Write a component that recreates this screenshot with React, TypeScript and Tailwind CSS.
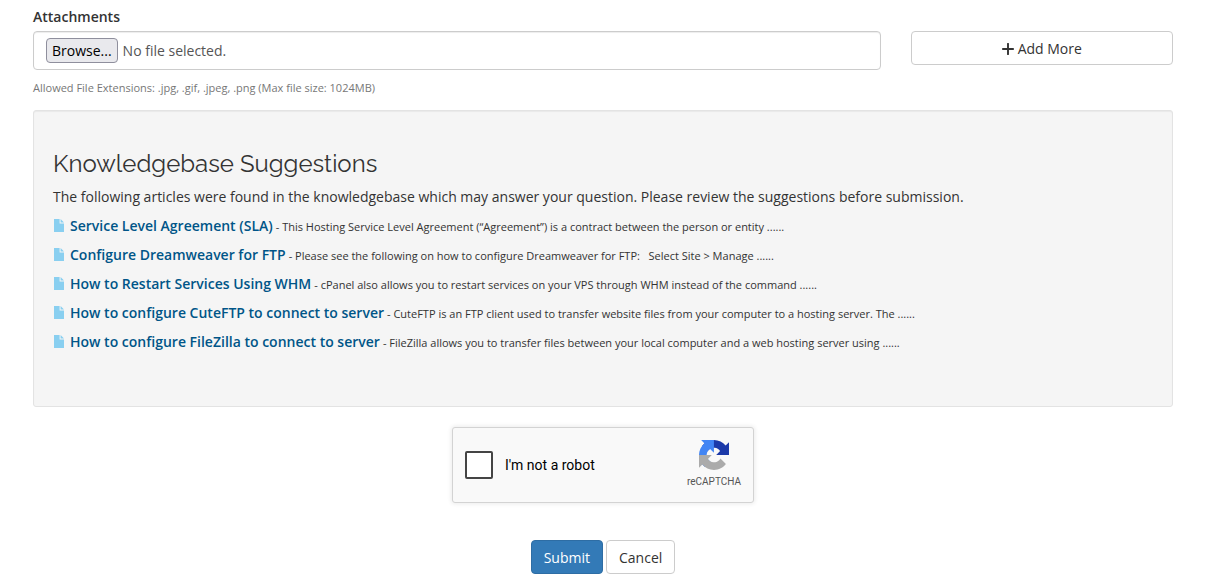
interface Article {
  id: number;
  title: string;
  slug: string;
  summary: string;
}

const App = () => {
  return (
    <main className="min-h-screen bg-white pr-3 font-['Open_Sans',sans-serif] text-sm leading-5 text-[#333]">
      <form
        className="mx-auto max-w-[1170px] px-[15px] pt-[7px]"
        onSubmit={(e) => e.preventDefault()}
      >
        <Attachments />
        <Suggestions />
        <Recaptcha />
        <div className="mt-[37px] flex justify-center gap-[3px] pb-3">
          <button
            type="submit"
            className="rounded border border-[#2e6da4] bg-[#337ab7] px-3 pt-[7px] pb-[5px] text-white"
          >
            Submit
          </button>
          <button
            type="button"
            className="rounded border border-[#ccc] bg-white px-3 pt-[7px] pb-[5px]"
          >
            Cancel
          </button>
        </div>
      </form>
    </main>
  );
};

const Attachments = () => {
  return (
    <section>
      <label htmlFor="attachments" className="mb-1 block font-semibold">
        Attachments
      </label>
      <div className="grid grid-cols-4 items-start gap-[30px]">
        <label className="col-span-3 flex cursor-pointer items-center gap-[5px] rounded border border-[#ccc] px-3 py-[6px] leading-[19px] text-[#555] shadow-[inset_0_1px_1px_rgba(0,0,0,0.075)]">
          <input id="attachments" type="file" className="sr-only" />
          <span className="rounded border border-[#8f8f9d] bg-[#e9e9ed] px-[5px] py-[2px] text-black">
            Browse...
          </span>
          <span>No file selected.</span>
        </label>
        <button
          type="button"
          className="flex items-center justify-center gap-1 rounded border border-[#ccc] bg-white px-3 pt-[7px] pb-[5px]"
        >
          <PlusIcon />
          Add More
        </button>
      </div>
      <p className="mt-2 text-[11px] text-[#777]">
        Allowed File Extensions: .jpg, .gif, .jpeg, .png (Max file size: 1024MB)
      </p>
    </section>
  );
};

const Suggestions = () => {
  return (
    <section className="mt-3 rounded-[3px] border border-[#e3e3e3] bg-[#f5f5f5] px-[19px] pt-10 pb-[54px] shadow-[inset_0_1px_1px_rgba(0,0,0,0.05)]">
      <h2 className="font-[Raleway,Lato,sans-serif] text-2xl leading-[26px]">
        Knowledgebase Suggestions
      </h2>
      <p className="mt-[10px]">
        The following articles were found in the knowledgebase which may answer
        your question. Please review the suggestions before submission.
      </p>
      <ul className="mt-[9px] flex flex-col gap-[9px]">
        {articles.map((article) => (
          <li key={article.id} className="flex items-baseline">
            <FileIcon />
            <a href={`/${article.slug}`} className="font-semibold text-[#058]">
              {article.title}
            </a>
            <span className="ml-[3px] text-[11px] leading-4 whitespace-pre-wrap">
              - {article.summary}
            </span>
          </li>
        ))}
      </ul>
    </section>
  );
};

const Recaptcha = () => {
  return (
    <div className="mx-auto mt-5 flex w-[302px] items-center rounded-[3px] border border-[#d3d3d3] bg-[#f9f9f9] p-3 font-[Roboto,sans-serif] text-black shadow-[0_0_4px_1px_rgba(0,0,0,0.08)]">
      <input
        id="robot"
        type="checkbox"
        className="size-7 appearance-none rounded-[2px] border-2 border-[#444] bg-white checked:bg-[#4285f4]"
      />
      <label htmlFor="robot" className="ml-3 flex-1">
        I'm not a robot
      </label>
      <div className="flex flex-col items-center">
        <RecaptchaLogo />
        <span className="mt-1 text-[10px] leading-4 text-[#555]">
          reCAPTCHA
        </span>
      </div>
    </div>
  );
};

const PlusIcon = () => (
  <svg viewBox="0 0 12 12" className="size-3" aria-hidden="true">
    <path
      d="M6 .8v10.4M.8 6h10.4"
      stroke="currentColor"
      strokeWidth="1.9"
      strokeLinecap="round"
    />
  </svg>
);

const FileIcon = () => (
  <svg
    viewBox="0 0 12 14"
    className="mr-[5px] h-[14px] w-3 self-center text-[#89cff0]"
    fill="currentColor"
    aria-hidden="true"
  >
    <path d="M1 0h5.6v4.4H11V13H1zM7.6 0L11 3.4H7.6z" />
  </svg>
);

const RecaptchaLogo = () => (
  <svg viewBox="0 0 64 64" className="size-[30px]" aria-hidden="true">
    <path
      fill="#1c3aa9"
      d="M64 31.955l-.033-1.37V4.687l-7.16 7.16C50.948 4.674 42.033.093 32.05.093c-10.4 0-19.622 4.96-25.458 12.64l11.736 11.86a15.55 15.55 0 0 1 4.754-5.334c2.05-1.6 4.952-2.906 8.968-2.906.485 0 .86.057 1.135.163 4.976.393 9.288 3.14 11.828 7.124l-8.307 8.307L64 31.953"
    />
    <path
      fill="#4285f4"
      d="M31.862.094l-1.37.033H4.594l7.16 7.16C4.58 13.147 0 22.06 0 32.046c0 10.4 4.96 19.622 12.64 25.458L24.5 45.768a15.55 15.55 0 0 1-5.334-4.754c-1.6-2.05-2.906-4.952-2.906-8.968 0-.485.057-.86.163-1.135.393-4.976 3.14-9.288 7.124-11.828l8.307 8.307L31.86.095"
    />
    <path
      fill="#ababab"
      d="M.001 32.045l.033 1.37v25.898l7.16-7.16c5.86 7.173 14.774 11.754 24.76 11.754 10.4 0 19.622-4.96 25.458-12.64l-11.736-11.86a15.55 15.55 0 0 1-4.754 5.334c-2.05 1.6-4.952 2.906-8.968 2.906-.485 0-.86-.057-1.135-.163-4.976-.393-9.288-3.14-11.828-7.124l8.307-8.307c-10.522.04-22.4.066-27.295-.005"
    />
  </svg>
);

export default App;

export const articles: Article[] = [
  {
    id: 1,
    title: "Service Level Agreement (SLA)",
    slug: "knowledgebase/service-level-agreement",
    summary:
      "This Hosting Service Level Agreement (“Agreement”) is a contract between the person or entity ......",
  },
  {
    id: 2,
    title: "Configure Dreamweaver for FTP",
    slug: "knowledgebase/configure-dreamweaver",
    summary:
      "Please see the following on how to configure Dreamweaver for FTP:   Select Site > Manage ......",
  },
  {
    id: 3,
    title: "How to Restart Services Using WHM",
    slug: "knowledgebase/restart-services-whm",
    summary:
      "cPanel also allows you to restart services on your VPS through WHM instead of the command ......",
  },
  {
    id: 4,
    title: "How to configure CuteFTP to connect to server",
    slug: "knowledgebase/configure-cuteftp",
    summary:
      "CuteFTP is an FTP client used to transfer website files from your computer to a hosting server. The ......",
  },
  {
    id: 5,
    title: "How to configure FileZilla to connect to server",
    slug: "knowledgebase/configure-filezilla",
    summary:
      "FileZilla allows you to transfer files between your local computer and a web hosting server using ......",
  },
];
